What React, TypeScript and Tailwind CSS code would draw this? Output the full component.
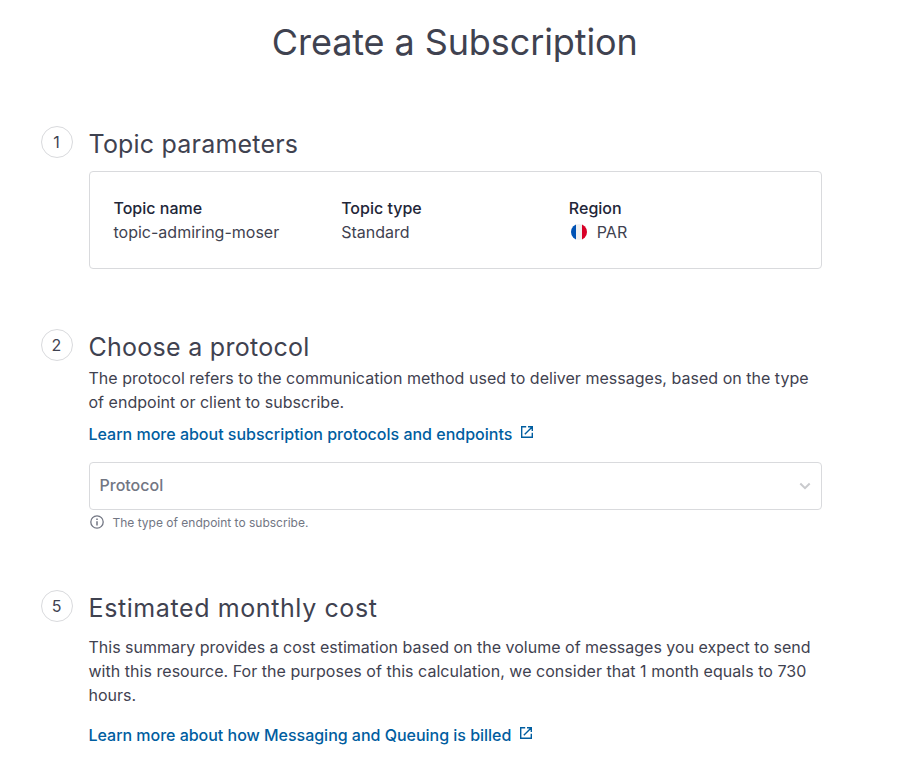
import React from "react";

type StepProps = { n: number; title: string; className: string; titleClass: string; children: React.ReactNode };

function Step({ n, title, className, titleClass, children }: StepProps) {
  return (
    <section className={`flex gap-4 ${className}`}>
      <div className="mt-px flex h-8 w-8 shrink-0 items-center justify-center rounded-full border border-[#d9dadd]">{n}</div>
      <div className="w-[733px]">
        <h2 className={`h-9 whitespace-nowrap text-[25px] font-normal leading-[38px] ${titleClass}`}>{title}</h2>
        {children}
      </div>
    </section>
  );
}

function DocLink({ className, children }: { className: string; children: string }) {
  return (
    <a className={`block w-fit whitespace-nowrap font-medium text-[#005da0] ${className}`}>
      {children}
      <svg className="ml-2 inline-block h-[14px] w-[14px] -translate-y-1" viewBox="0 0 14 14" fill="none" stroke="currentColor" strokeWidth="1.4">
        <path d="M6.2 1.7H1.7v10.6h10.6V7.8M8 1.7h4.3V6M12.1 1.9 4.8 9.2" />
      </svg>
    </a>
  );
}

function Field({ label, children }: { label: string; children: React.ReactNode }) {
  return (
    <div>
      <div className="font-medium text-[#222638]">{label}</div>
      <div className="flex items-center">{children}</div>
    </div>
  );
}

export default function App() {
  return (
    <main className="h-[760px] w-[902px] overflow-hidden bg-white pl-[40.5px] font-['Inter',sans-serif] text-[16px] leading-6 text-[#3f4250]">
      <h1 className="pt-5 pr-[33px] text-center text-[36px] font-normal leading-[44px] tracking-[-0.1px]">Create a Subscription</h1>

      <Step n={1} title="Topic parameters" className="mt-[61px]" titleClass="tracking-[0.2px]">
        <div className="mt-[10px] grid h-[98px] grid-cols-3 rounded border border-[#d9dadd] px-6 pt-6">
          <Field label="Topic name">topic-admiring-moser</Field>
          <Field label="Topic type">Standard</Field>
          <Field label="Region">
            <span className="ml-0.5 mr-[10px] flex h-4 w-4 overflow-hidden rounded-full">
              <span className="w-[5px] bg-[#0052b4]" />
              <span className="w-[6px] bg-[#f0f0f0]" />
              <span className="w-[5px] bg-[#d80027]" />
            </span>
            PAR
          </Field>
        </div>
      </Step>

      <Step n={2} title="Choose a protocol" className="mt-[59px]" titleClass="tracking-[0.27px]">
        <p className="mt-0.5 tracking-[0.02px]">
          The protocol refers to the communication method used to deliver messages, based on the type
          <br />
          of endpoint or client to subscribe.
        </p>
        <DocLink className="mt-2">Learn more about subscription protocols and endpoints</DocLink>
        <div className="mt-4 flex h-12 items-center justify-between rounded border border-[#d9dadd] pl-[10px] pr-[10px] pb-[2px] font-medium text-[#727683]">
          Protocol
          <svg className="mt-0.5 h-3 w-3" viewBox="0 0 12 12" fill="none" stroke="#c9cacd" strokeWidth="2">
            <path d="m1.3 3.5 4.7 4.7 4.7-4.7" />
          </svg>
        </div>
        <div className="mt-1 flex h-[18px] items-center text-[12px] leading-[18px] text-[#727683]">
          <svg className="ml-px mr-[9px] h-[14px] w-[14px] -translate-y-px" viewBox="0 0 14 14" fill="none" stroke="currentColor" strokeWidth="1.3">
            <circle cx="7" cy="7" r="6.2" />
            <path d="M7 6.2v4.2M7 3.5v1.4" strokeWidth="1.5" />
          </svg>
          The type of endpoint to subscribe.
        </div>
      </Step>

      <Step n={5} title="Estimated monthly cost" className="mt-[57px]" titleClass="tracking-[0.6px]">
        <p className="mt-[10px]">
          This summary provides a cost estimation based on the volume of messages you expect to send
          <br />
          <span className="tracking-[0.03px]">with this resource. For the purposes of this calculation, we consider that 1 month equals to 730</span>
          <br />
          hours.
        </p>
        <DocLink className="mt-4 tracking-[-0.02px]">Learn more about how Messaging and Queuing is billed</DocLink>
      </Step>
    </main>
  );
}
